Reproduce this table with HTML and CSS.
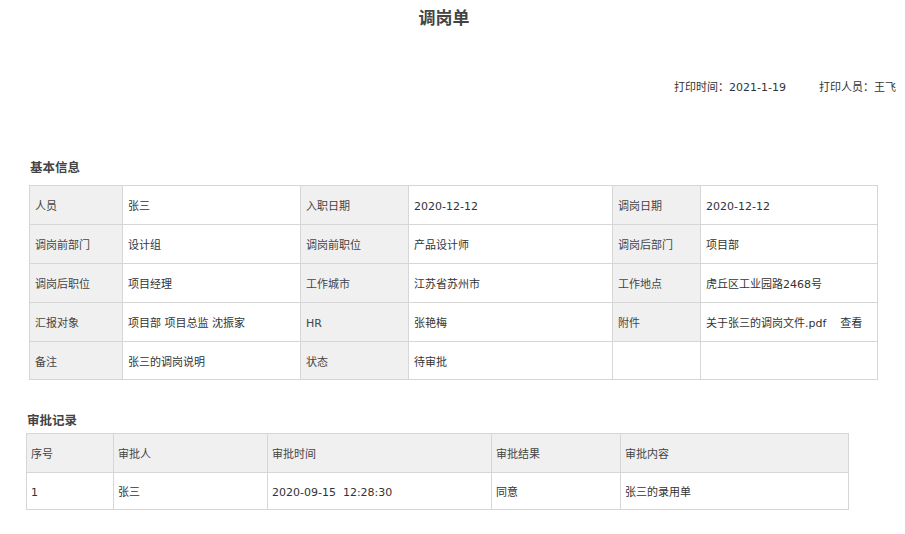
FILE: index.html
```html
<!DOCTYPE html>
<html lang="zh-CN">
<head>
<meta charset="utf-8">
<title>调岗单</title>
<link rel="stylesheet" href="styles.css">
</head>
<body>
<div class="page">
  <h1 class="title">调岗单</h1>
  <div class="print-info">
    <span>打印时间：2021-1-19</span>
    <span>打印人员：王飞</span>
  </div>

  <section class="section basic">
    <h2 class="section-title">基本信息</h2>
    <table class="info-table">
      <colgroup>
        <col class="c1"><col class="c2"><col class="c3"><col class="c4"><col class="c5"><col class="c6">
      </colgroup>
      <tr>
        <td class="label">人员</td><td>张三</td>
        <td class="label">入职日期</td><td>2020-12-12</td>
        <td class="label">调岗日期</td><td>2020-12-12</td>
      </tr>
      <tr>
        <td class="label">调岗前部门</td><td>设计组</td>
        <td class="label">调岗前职位</td><td>产品设计师</td>
        <td class="label">调岗后部门</td><td>项目部</td>
      </tr>
      <tr>
        <td class="label">调岗后职位</td><td>项目经理</td>
        <td class="label">工作城市</td><td>江苏省苏州市</td>
        <td class="label">工作地点</td><td>虎丘区工业园路2468号</td>
      </tr>
      <tr>
        <td class="label">汇报对象</td><td>项目部 项目总监 沈振家</td>
        <td class="label">HR</td><td>张艳梅</td>
        <td class="label">附件</td><td><span class="file">关于张三的调岗文件.pdf</span><span class="view">查看</span></td>
      </tr>
      <tr class="last">
        <td class="label">备注</td><td>张三的调岗说明</td>
        <td class="label">状态</td><td>待审批</td>
        <td></td><td></td>
      </tr>
    </table>
  </section>

  <section class="section records">
    <h2 class="section-title">审批记录</h2>
    <table class="record-table">
      <colgroup>
        <col class="r1"><col class="r2"><col class="r3"><col class="r4"><col class="r5">
      </colgroup>
      <tr class="head">
        <td>序号</td><td>审批人</td><td>审批时间</td><td>审批结果</td><td>审批内容</td>
      </tr>
      <tr class="last">
        <td>1</td><td>张三</td><td>2020-09-15&nbsp;&nbsp;12:28:30</td><td>同意</td><td>张三的录用单</td>
      </tr>
    </table>
  </section>
</div>
</body>
</html>
```

FILE: styles.css
```css
* { box-sizing: border-box; }

html, body {
  margin: 0;
  padding: 0;
  background: #ffffff;
}

body {
  font-family: "DejaVu Sans", "Noto Sans CJK SC", sans-serif;
  color: #333333;
  font-size: 11px;
}

.page {
  width: 905px;
  padding-top: 5px;
}

.title {
  margin: 0;
  padding-right: 17px;
  text-align: center;
  font-family: "Noto Sans CJK SC", sans-serif;
  font-size: 17px;
  line-height: 24px;
  font-weight: 700;
  color: #444444;
}

.print-info {
  display: flex;
  justify-content: flex-end;
  gap: 33px;
  margin-top: 51px;
  padding-right: 9px;
  font-size: 11px;
  line-height: 16px;
  color: #333333;
}

.section-title {
  margin: 0;
  font-family: "Noto Sans CJK SC", sans-serif;
  font-size: 12.5px;
  line-height: 18px;
  font-weight: 700;
  color: #444444;
}

.basic {
  margin-top: 62px;
  padding-left: 29px;
}

.basic .section-title {
  padding-left: 1px;
  margin-bottom: 9px;
}

.records {
  margin-top: 31px;
  padding-left: 26px;
}

.records .section-title {
  padding-left: 1px;
  margin-bottom: 4px;
}

table {
  border-collapse: collapse;
  table-layout: fixed;
}

td {
  border: 1px solid #d6d6d6;
  padding: 13px 5px 9px;
  line-height: 16px;
  font-size: 11px;
  color: #333333;
  white-space: nowrap;
  overflow: hidden;
  vertical-align: middle;
}

.info-table { width: 848px; }
.c1 { width: 93px; }
.c2 { width: 178px; }
.c3 { width: 108px; }
.c4 { width: 204px; }
.c5 { width: 88px; }
.c6 { width: 177px; }

.info-table .last td { padding-bottom: 8px; }

.label {
  background: #f0f0f0;
  color: #444444;
}

.file { margin-right: 14px; }

.record-table { width: 822px; }
.r1 { width: 87px; }
.r2 { width: 154px; }
.r3 { width: 224px; }
.r4 { width: 129px; }
.r5 { width: 228px; }

.record-table td { padding-left: 4px; }
.record-table .last td { padding-top: 12px; padding-bottom: 8px; }

.head td {
  background: #f0f0f0;
  color: #444444;
}
```
